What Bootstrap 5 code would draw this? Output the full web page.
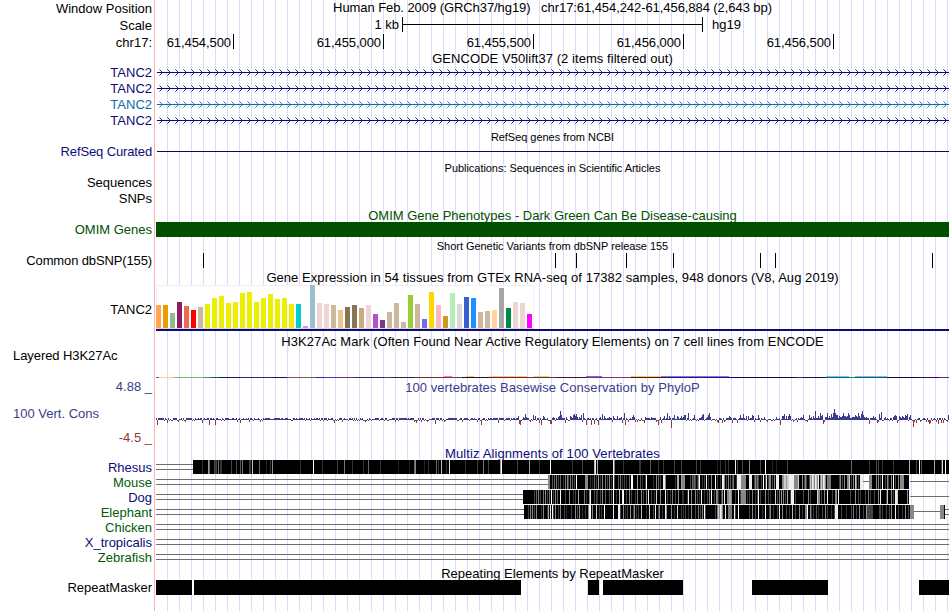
<!DOCTYPE html>
<html lang="en">
  <head>
    <meta charset="UTF-8" />
    <meta name="viewport" content="width=device-width, initial-scale=1.0" />
    <title>Genome Browser - chr17:61,454,242-61,456,884</title>
    <link
      href="https://cdn.jsdelivr.net/npm/bootstrap@5.3.0/dist/css/bootstrap.min.css"
      rel="stylesheet"
    />
    <style>
      body {
        font-family: "Liberation Sans", Arial, sans-serif;
        font-size: 13px;
        line-height: 16px;
        color: #000;
        overflow: hidden;
      }
      .browser {
        width: 949px;
        height: 611px;
        /* red edge of the data area, then a guide line every 12px */
        background:
          linear-gradient(#ffb0b0, #ffb0b0) 154px 0 / 1px 100% no-repeat,
          repeating-linear-gradient(90deg, #dcdcfa 0 1px, transparent 1px 12px) 167px 0 no-repeat;
      }
      .track-label { width: 152px; flex: none; white-space: nowrap; }
      .track-data { width: 793px; margin-left: 4px; flex: none; }
      .track-data svg { display: block; overflow: visible; }
      .track-title { white-space: pre; }
      .title-small { font-size: 11px; letter-spacing: -.04px; }
      .tight { letter-spacing: -.07px; }
      .tighter { letter-spacing: -.13px; }
      .wide { letter-spacing: .055px; }
      .wider { letter-spacing: .11px; }
      .drop { padding-top: 2px; }
      .drop-more { padding-top: 4px; }
      .h-14 { height: 14px; }
      .h-15 { height: 15px; }
      .h-16 { height: 16px; }
      .h-17 { height: 17px; }
      .h-29 { height: 29px; }
      .h-49 { height: 49px; }
      .h-50px { height: 50px; }
      .navy { color: #0c0c78; }
      .blue { color: #0a6eaa; }
      .green { color: #005000; }
      .species-green { color: #005a0a; }
      .cons { color: #3c3c8c; }
      .cons-low { color: #8c3c3c; }
      .pad-left { padding-left: 13px; }
      svg text { font-size: 13px; }
    </style>
  </head>
  <body class="bg-white">
    <main class="browser d-flex flex-column" id="browser"></main>

    <script src="https://cdn.jsdelivr.net/npm/bootstrap@5.3.0/dist/js/bootstrap.bundle.min.js"></script>
    <script>
      // plots use the image's own x scale, the data area starts at 156
      const LEFT = 156;
      const RIGHT = 949;

      const rect = (x, y, w, h, fill) =>
        `<rect x="${x}" y="${y}" width="${w}" height="${h}" fill="${fill}"/>`;

      const plot = (height, content) =>
        `<svg width="793" height="${height}" viewBox="${LEFT} 0 793 ${height}" shape-rendering="crispEdges">${content}</svg>`;

      function track(height, label, labelClass, data, titleClass) {
        const body = titleClass === undefined
          ? `<div class="track-data">${data}</div>`
          : `<div class="track-data track-title text-center ${titleClass}">${data}</div>`;
        return `<div class="d-flex align-items-center ${height}">
          <div class="track-label text-end ${labelClass}">${label}</div>${body}</div>`;
      }

      const title = (height, text, cls = "") => track(height, "", "", text, cls);

      function scaleBar() {
        return plot(17,
          rect(402, 1, 1, 15, "#000") + rect(702, 1, 1, 15, "#000") + rect(402, 8, 300, 1, "#000") +
          `<text x="399" y="13" text-anchor="end">1 kb</text><text x="712" y="13">hg19</text>`);
      }

      function ruler() {
        const names = ["61,454,500", "61,455,000", "61,455,500", "61,456,000", "61,456,500"];
        return plot(17, names.map((n, i) => {
          const x = 233 + i * 150;
          return rect(x, 1, 1, 15, "#000") +
            `<text class="tight" x="${x - 2}" y="14" text-anchor="end">${n}</text>`;
        }).join(""));
      }

      // intron line with strand arrows
      function gene(color) {
        let d = "";
        for (let x = 159; x < RIGHT - 2; x += 8) d += `M${x + .5} 5.5l3 3l-3 3`;
        return plot(16, rect(157, 8, RIGHT - 157, 1, color) +
          `<path d="${d}" fill="none" stroke="${color}" stroke-width=".9" shape-rendering="auto"/>`);
      }

      const snps = [203, 555, 576, 626, 673, 760, 775, 932];

      const tissues = [
        [23, "#ffa54f"], [23, "#ee9a00"], [15, "#8fbc8f"], [26, "#8b1c62"], [22, "#ee6a50"],
        [18, "#ff0000"], [21, "#cdb79e"], [24], [30], [32], [25], [26], [35], [36], [26], [30],
        [34], [29], [30], [24], [24, "#00cdcd"], [2, "#ee82ee"], [43, "#9ac0cd"],
        [25, "#eed5d2"], [24, "#eed5d2"], [23, "#cdb79e"], [18, "#eec591"], [21, "#8b7355"],
        [23, "#8b7355"], [20, "#cdaa7d"], [23, "#eed5d2"], [14, "#b452cd"], [8, "#7a378b"],
        [16, "#cdb79e"], [25, "#cdb79e"], [6, "#cdb79e"], [33, "#9acd32"], [24, "#cdb79e"],
        [9, "#7a67ee"], [36, "#ffd700"], [23, "#ffb6c1"], [12, "#cd9b1d"], [35, "#b4eeb4"],
        [24, "#d9d9d9"], [31, "#3a5fcd"], [30, "#1e90ff"], [16, "#cdb79e"], [17, "#cdb79e"],
        [18, "#ffd39b"], [40, "#a6a6a6"], [20, "#008b45"], [26, "#eed5d2"], [25, "#eed5d2"],
        [14, "#ff00ff"],
      ];

      function expression() {
        return plot(49,
          rect(156, 0, 378, 44, "#f0f0f0") + rect(157, 1, 376, 42, "#fff") +
          rect(156, 43, 378, 1, "#d8d8d8") +
          tissues.map(([h, c], i) => rect(156 + i * 7, 43 - h, 5, h, c || "#eeee00")).join("") +
          rect(156, 44, 793, 2, "#0c0c78"));
      }

      function h3k27ac() {
        const base = [
          [156, "#75606e"], [159, "#ffcc80"], [174, "#72c06e"], [204, "#3d9468"], [211, "#1f5a5c"],
          [219, "#14145a"], [240, "#28286e"], [272, "#1c1450"], [287, "#84545e"], [316, "#2020c8"],
          [324, "#6428b4"], [337, "#6e3278"], [354, "#32285a"], [384, "#28505a"], [391, "#32203c"],
          [414, "#782828"], [444, "#823250"], [462, "#1e1414"], [489, "#6e1e3c"], [527, "#503c3c"],
          [556, "#46141e"], [586, "#a01e64"], [602, "#82326e"], [631, "#501414"], [661, "#32145a"],
          [729, "#0c0c50"], [797, "#5a1464"], [804, "#14144b"], [826, "#285a78"], [849, "#00a03c"],
          [855, "#28506e"], [887, "#0a0a4b"], [917, "#280a64"], [939, "#781e64"], [949, ""],
        ];
        const peaks = [
          [444, 8, "#ff78c8"], [466, 8, "#ffc864"], [489, 38, "#ffc864"], [534, 15, "#ffc864"],
          [586, 16, "#6e64ff"], [631, 30, "#ffc864"], [661, 68, "#7878ff"],
          [826, 23, "#64c8ff"], [855, 32, "#64c8ff"],
        ];
        return plot(29,
          base.slice(0, -1).map(([x, c], i) => rect(x, 28, base[i + 1][0] - x, 1, c)).join("") +
          peaks.map(([x, w, c]) => rect(x, 27, w, 1, c)).join(""));
      }

      // PhyloP: small scores everywhere, then the stronger positions by x
      function conservation() {
        const high = {
          518: 4, 520: 5, 523: 3, 525: 6, 526: 3, 533: 5, 535: 4, 543: 4, 544: 3, 553: 3, 558: 3,
          559: 4, 560: 9, 561: 5, 565: 5, 566: 3, 570: 4, 571: 3, 573: 5, 574: 6, 575: 4, 576: 6,
          577: 3, 579: 3, 581: 5, 583: 7, 591: 4, 594: 3, 600: 3, 602: 6, 604: 4, 609: 3, 613: 4,
          617: 4, 621: 3, 624: 7, 632: 3, 633: 5, 634: 3, 645: 3, 651: 3, 660: 3, 664: 4, 667: 7,
          669: 4, 674: 5, 677: 4, 678: 3, 681: 4, 683: 3, 684: 5, 685: 5, 688: 7, 694: 5, 701: 3,
          702: 5, 703: 6, 707: 3, 708: 5, 709: 7, 710: 3, 729: 4, 730: 3, 740: 5, 743: 6, 746: 4,
          748: 4, 752: 5, 753: 4, 758: 5, 764: 3, 776: 3, 782: 4, 783: 4, 784: 6, 786: 4, 788: 4,
          789: 6, 790: 4, 801: 3, 803: 5, 809: 5, 811: 3, 813: 4, 815: 9, 818: 4, 820: 7, 821: 4,
          822: 5, 825: 3, 826: 3, 827: 7, 829: 4, 831: 6, 832: 3, 833: 7, 834: 11, 835: 7, 836: 5,
          837: 5, 839: 4, 840: 3, 841: 3, 842: 4, 843: 7, 844: 4, 845: 4, 846: 3, 847: 4, 848: 7,
          849: 5, 852: 3, 853: 3, 854: 3, 855: 5, 856: 4, 857: 3, 858: 7, 859: 4, 861: 6, 862: 9,
          863: 5, 864: 3, 866: 3, 873: 4, 875: 3, 879: 6, 881: 8, 885: 3, 893: 3, 894: 4, 895: 5,
          896: 4, 899: 4, 900: 3, 902: 4, 903: 3, 905: 5, 906: 4, 907: 6, 909: 3, 910: 5, 948: 5,
        };
        const low = {
          157: 5, 167: 3, 178: 2, 185: 2, 202: 3, 209: 5, 215: 5, 240: 3, 249: 2, 334: 3, 395: 2,
          414: 2, 416: 3, 427: 2, 435: 4, 481: 5, 498: 3, 519: 4, 520: 5, 530: 2, 539: 3, 541: 5,
          550: 4, 551: 4, 565: 3, 586: 5, 591: 5, 594: 4, 598: 5, 612: 2, 622: 3, 625: 5, 644: 3,
          658: 5, 661: 3, 671: 8, 717: 2, 718: 3, 722: 3, 724: 2, 732: 3, 737: 3, 754: 2, 767: 2,
          780: 5, 793: 2, 797: 2, 807: 2, 823: 4, 869: 4, 877: 3, 878: 2, 897: 3, 913: 7, 914: 2,
          916: 3, 920: 2, 926: 2, 928: 2, 929: 4, 930: 3, 938: 4, 941: 3, 943: 3, 947: 2,
        };
        let out = "";
        let seed = 7;
        for (let x = 156; x < RIGHT; x++) {
          seed = (seed * 1103515245 + 12345) % 2147483648;
          const r = seed / 2147483648;
          const y = 26;
          if (low[x]) {
            out += rect(x, y, 1, low[x], "#8c3c3c");
          } else if (high[x]) {
            out += rect(x, y - high[x], 1, high[x], "#3c3c8c");
          } else if (r < .18) {
            out += rect(x, y, 1, r < .03 ? 2 : 1, "#8c3c3c");
          } else {
            const busy = x > 815 && x < 868;
            out += rect(x, y - (busy || r > .5 ? 2 : 1), 1, busy || r > .5 ? 2 : 1, "#3c3c8c");
          }
        }
        return plot(50, out);
      }

      const doubleLine = (from, to) =>
        rect(from, 4, to - from, 1, "#6e6e6e") + rect(from, 9, to - from, 1, "#6e6e6e");
      const singleLine = (from, to) => rect(from, 6, to - from, 1, "#6e6e6e");

      // one hex digit per pixel: 0 is a full match, f none
      const shades = (start, codes) => [...codes].map((c, i) =>
        c === "-" ? "" : rect(start + i, 0, 1, 14, `#${c}${c}${c}`)).join("");

      function rhesus() {
        const marks = "202:3 208:9 209:6 214:4 215:3 216:4 218:7 220:3 221:3 231:4 236:4 240:5 242:7 249:4 250:3 252:b " +
          "259:6 266:2 270:3 272:8 300:3 313:f 322:3 337:4 344:7 352:3 363:3 368:6 380:3 398:2 409:2 414:6 415:8 " +
          "424:2 428:3 436:6 438:3 441:b 446:3 449:d 465:3 477:4 483:7 488:4 500:9 501:f 517:4 529:9 539:3 550:f " +
          "572:3 582:4 594:b 595:e 597:a 613:e 614:7 623:3 639:3 640:3 650:5 658:3 663:3 674:4 681:4 696:4 700:3 " +
          "717:2 720:3 725:3 728:3 735:e 737:4 742:4 749:8 760:4 765:f 772:2 776:2 787:4 851:6 869:3 876:4 878:4 882:3 " +
          "893:3 909:a 916:4 919:f 921:5 934:a 941:4 942:d 945:f";
        return plot(15, doubleLine(156, 193) + rect(193, 0, 756, 14, "#000") +
          marks.split(" ").map((m) => {
            const [x, c] = m.split(":");
            return rect(x, 0, 1, 14, `#${c}${c}${c}`);
          }).join(""));
      }

      function mouse() {
        return plot(15, doubleLine(156, 548) + shades(548,
          "8800506070" + "4060030708" + "40706040f0" + "0000000888" + "0030206040" + "9030800704" +
          "08030f4000" + "5070304030" + "060ff00009" + "00503004f0" + "0000030080" + "60400ee800" +
          "000000030a" + "a009888000" + "0040646403" + "8f003040e0" + "3008000f04" + "0030ee8040" +
          "805047003e" + "eee8888800" + "0eee004847" + "40040f04e0" + "48804080ee" + "e00089cc9c" +
          "ceeeee8888" + "c000804840" + "04c8ec8ec8" + "e08c8ec807" + "7770000000" + "0480408008" +
          "8c04080c80" + "40eee-----" + "-888000080" + "8040f00408" + "40080f0400" + "8088880000" + "0") +
          singleLine(863, 869) + singleLine(910, RIGHT));
      }

      function dog() {
        return plot(15, doubleLine(156, 523) + shades(523,
          "0000000000" + "0406080400" + "70804070f0" + "4080600f00" + "0040008000" + "30400a0000" +
          "0703008e00" + "0404300408" + "0050004040" + "f00300b00e" + "f004008040" + "0030700080" +
          "40080e0040" + "030c000800" + "00e0400307" + "0040080003" + "30003e0080" + "00804030e0" +
          "03004080f0" + "0408730048" + "0e0088aa80" + "00400f0488" + "8880304007" + "00304f0400" +
          "0080040300" + "00c0407090" + "8040a004ee" + "e040000000" + "4000080400" + "0000c88040" +
          "0800e00004" + "00880e0000" + "0000000400" + "0080040300" + "0040070300" + "0400080e00" +
          "0004c00080" + "40eec00000" + "000080") +
          singleLine(910, RIGHT));
      }

      function elephant() {
        return plot(15, doubleLine(156, 524) + shades(524,
          "0000408080" + "4080000308" + "0003a0e0f4" + "0800408000" + "4030000400" + "0804080030" +
          "03008ef080" + "00c0040300" + "f00000000e" + "0000ee4008" + "0304008004" + "8030400b00" +
          "00300c0004" + "0e00480030" + "0e90000800" + "300c000403" + "0400300800" + "0400704080" +
          "f400000000" + "0407c8ec80" + "0e00777700" + "e400f00000" + "0000040080" + "0400e00030" +
          "0f00048003" + "00040e0080" + "00400300b0" + "0400080030" + "088f008403" + "0050300040" +
          "0804000300" + "4eee000400" + "0030000407" + "0040080004" + "0094444440" + "0000044040" +
          "0040040800" + "0e00400030" + "0800408888") +
          singleLine(914, 940) + rect(940, 0, 4, 14, "#888") + rect(944, 0, 1, 14, "#000") +
          doubleLine(945, RIGHT));
      }

      const repeats = [[156, 192], [194, 521], [588, 599], [603, 683], [752, 828], [919, 949]];

      const consLabels = `<div class="d-flex flex-column h-100 pt-2">
        <span class="text-start pad-left cons mt-1">100 Vert. Cons</span>
        <span class="cons-low mt-2">-4.5 _</span></div>`;

      document.getElementById("browser").innerHTML = [
        track("h-16", "Window Position", "drop", "Human Feb. 2009 (GRCh37/hg19)   chr17:61,454,242-61,456,884 (2,643 bp)", "tight"),
        track("h-17", "Scale", "drop", scaleBar()),
        track("h-17", "chr17:", "drop", ruler()),
        title("h-14", "GENCODE V50lift37 (2 items filtered out)", "drop-more wide"),
        track("h-16", "TANC2", "navy drop", gene("#0c0c78")),
        track("h-16", "TANC2", "navy drop", gene("#0c0c78")),
        track("h-16", "TANC2", "blue drop", gene("#0a6eaa")),
        track("h-16", "TANC2", "navy drop", gene("#0c0c78")),
        title("h-16", "RefSeq genes from NCBI", "title-small drop"),
        track("h-16", "RefSeq Curated", "navy tighter", plot(16, rect(157, 7, 792, 1, "#0c0c50"))),
        title("h-15", "Publications: Sequences in Scientific Articles", "title-small"),
        track("h-16", "Sequences", "", ""),
        track("h-16", "SNPs", "", ""),
        title("h-15", "OMIM Gene Phenotypes - Dark Green Can Be Disease-causing", "green drop"),
        track("h-15", "OMIM Genes", "green", plot(15, rect(156, 0, 793, 15, "#005000"))),
        title("h-16", "Short Genetic Variants from dbSNP release 155", "title-small drop"),
        track("h-15", "Common dbSNP(155)", "tighter", plot(15, snps.map((x) => rect(x, 0, 1, 15, "#000")).join(""))),
        title("h-17", "Gene Expression in 54 tissues from GTEx RNA-seq of 17382 samples, 948 donors (V8, Aug 2019)", "drop wide"),
        track("h-49", "TANC2", "", expression()),
        title("h-15", "H3K27Ac Mark (Often Found Near Active Regulatory Elements) on 7 cell lines from ENCODE", "wide"),
        track("h-29", `<div class="text-start pad-left pb-3">Layered H3K27Ac</div>`, "tight", h3k27ac()),
        track("h-16", "4.88 _", "cons drop", "100 vertebrates Basewise Conservation by PhyloP", "cons drop-more wide"),
        track("h-50px", consLabels, "align-self-start h-100", conservation()),
        title("h-16", "Multiz Alignments of 100 Vertebrates", "navy drop-more wider"),
        track("h-15", "Rhesus", "navy", rhesus()),
        track("h-15", "Mouse", "species-green", mouse()),
        track("h-15", "Dog", "navy", dog()),
        track("h-15", "Elephant", "species-green", elephant()),
        track("h-15", "Chicken", "species-green", plot(15, doubleLine(156, RIGHT))),
        track("h-15", "X_tropicalis", "navy", plot(15, doubleLine(156, RIGHT))),
        track("h-15", "Zebrafish", "species-green", plot(15, doubleLine(156, RIGHT))),
        title("h-15", "Repeating Elements by RepeatMasker", "drop"),
        track("h-15", "RepeatMasker", "", plot(15, repeats.map(([a, b]) => rect(a, 0, b - a, 15, "#000")).join(""))),
      ].join("");
    </script>
  </body>
</html>
